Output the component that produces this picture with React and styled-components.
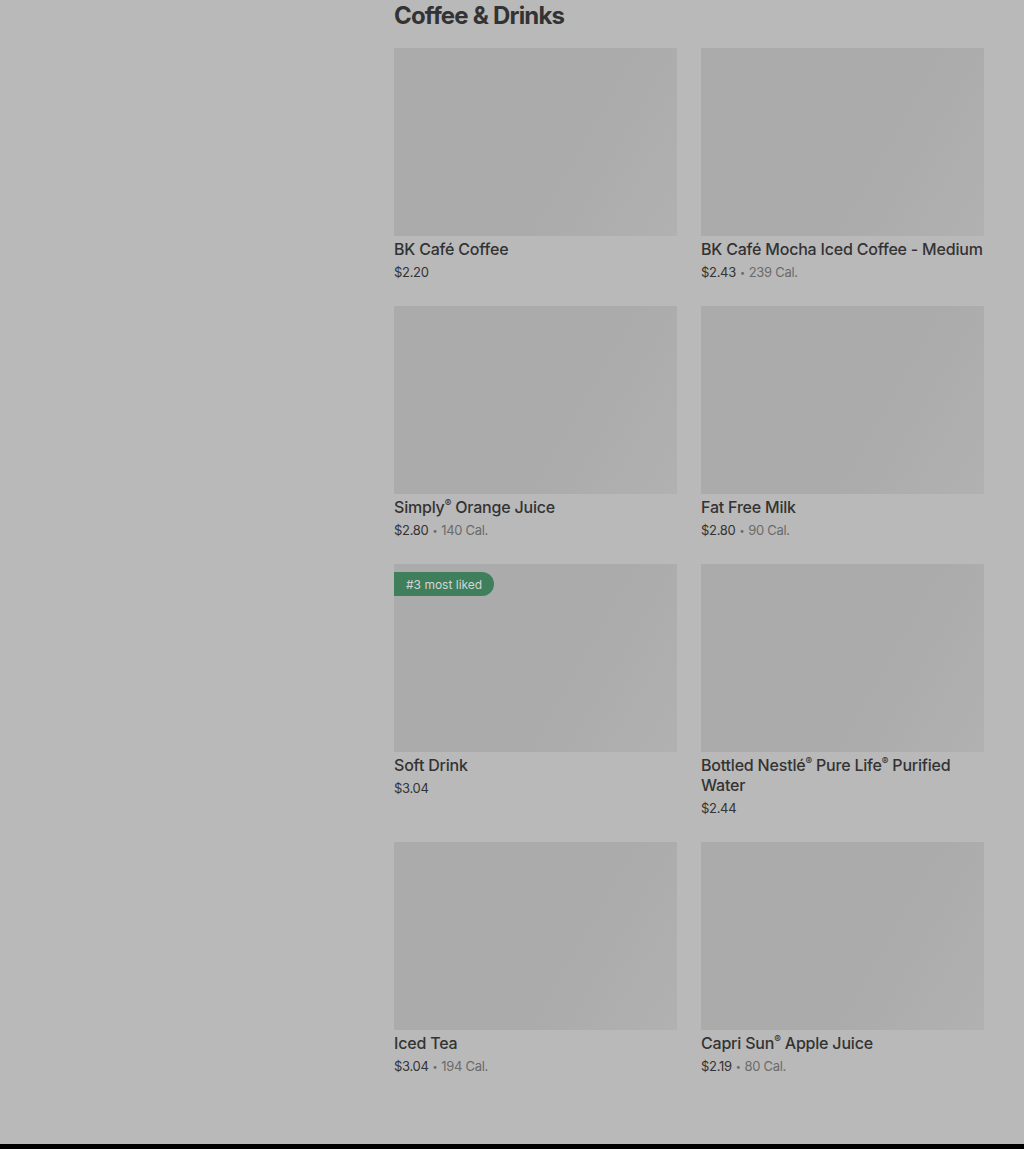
import styled, { createGlobalStyle } from 'styled-components';

const Global = createGlobalStyle`
  html, body { margin: 0; padding: 0; background: #b9b9b9; }
  body { font-family: Inter, "Noto Sans", sans-serif; color: #333; }
`;

const Page = styled.div`
  min-height: 1144px;
  display: flex;
  flex-direction: column;
  background: #b9b9b9;
`;

const Main = styled.main`
  flex: 1;
  padding: 0 40px 68px 394px;
`;

const Heading = styled.h2`
  margin: 0 0 18px;
  padding-top: 1px;
  font-size: 24px;
  line-height: 29px;
  font-weight: 700;
  letter-spacing: -0.8px;
  color: #333;
`;

const Grid = styled.div`
  display: grid;
  grid-template-columns: 283px 283px;
  column-gap: 24px;
  row-gap: 24px;
  align-items: start;
`;

const Card = styled.div`
  display: flex;
  flex-direction: column;
`;

const Thumb = styled.div`
  position: relative;
  height: 188px;
  background: linear-gradient(120deg, #ababab 0%, #ababab 62%, #b1b1b1 100%);
`;

const Badge = styled.span`
  position: absolute;
  top: 8px;
  left: 0;
  height: 24px;
  padding: 0 12px;
  display: flex;
  align-items: center;
  background: #3f7f5c;
  color: #d4d4d4;
  font-size: 12px;
  border-radius: 0 12px 12px 0;
`;

const Name = styled.div`
  margin-top: 3px;
  font-size: 16px;
  line-height: 20px;
  font-weight: 500;
  letter-spacing: -0.2px;
  color: #333;
`;

const Reg = styled.span`
  display: inline-block;
  font-size: 10px;
  line-height: 10px;
  vertical-align: top;
  margin-top: 1px;
`;

const Meta = styled.div`
  margin-top: 3px;
  height: 20px;
  font-size: 13px;
  line-height: 20px;
  letter-spacing: -0.3px;
  color: #333;
`;

const Dot = styled.span`
  display: inline-block;
  margin: 0 4px;
  font-size: 9px;
  line-height: 10px;
  vertical-align: 1px;
  color: #6b6b6b;
`;

const Cal = styled.span`
  color: #6b6b6b;
`;

const Footer = styled.div`
  height: 5px;
  background: #000;
`;

const items = [
  { name: ['BK Café Coffee'], price: '$2.20' },
  { name: ['BK Café Mocha Iced Coffee - Medium'], price: '$2.43', cal: '239 Cal.' },
  { name: ['Simply', '®', ' Orange Juice'], price: '$2.80', cal: '140 Cal.' },
  { name: ['Fat Free Milk'], price: '$2.80', cal: '90 Cal.' },
  { name: ['Soft Drink'], price: '$3.04', badge: '#3 most liked' },
  { name: ['Bottled Nestlé', '®', ' Pure Life', '®', ' Purified Water'], price: '$2.44' },
  { name: ['Iced Tea'], price: '$3.04', cal: '194 Cal.' },
  { name: ['Capri Sun', '®', ' Apple Juice'], price: '$2.19', cal: '80 Cal.' },
];

export default function App() {
  return (
    <Page>
      <Global />
      <Main>
        <Heading>Coffee &amp; Drinks</Heading>
        <Grid>
          {items.map((it) => (
            <Card key={it.name.join('')}>
              <Thumb>{it.badge && <Badge>{it.badge}</Badge>}</Thumb>
              <Name>
                {it.name.map((part, i) =>
                  part === '®' ? <Reg key={i}>®</Reg> : <span key={i}>{part}</span>
                )}
              </Name>
              <Meta>
                {it.price}
                {it.cal && (
                  <>
                    <Dot>•</Dot>
                    <Cal>{it.cal}</Cal>
                  </>
                )}
              </Meta>
            </Card>
          ))}
        </Grid>
      </Main>
      <Footer />
    </Page>
  );
}
